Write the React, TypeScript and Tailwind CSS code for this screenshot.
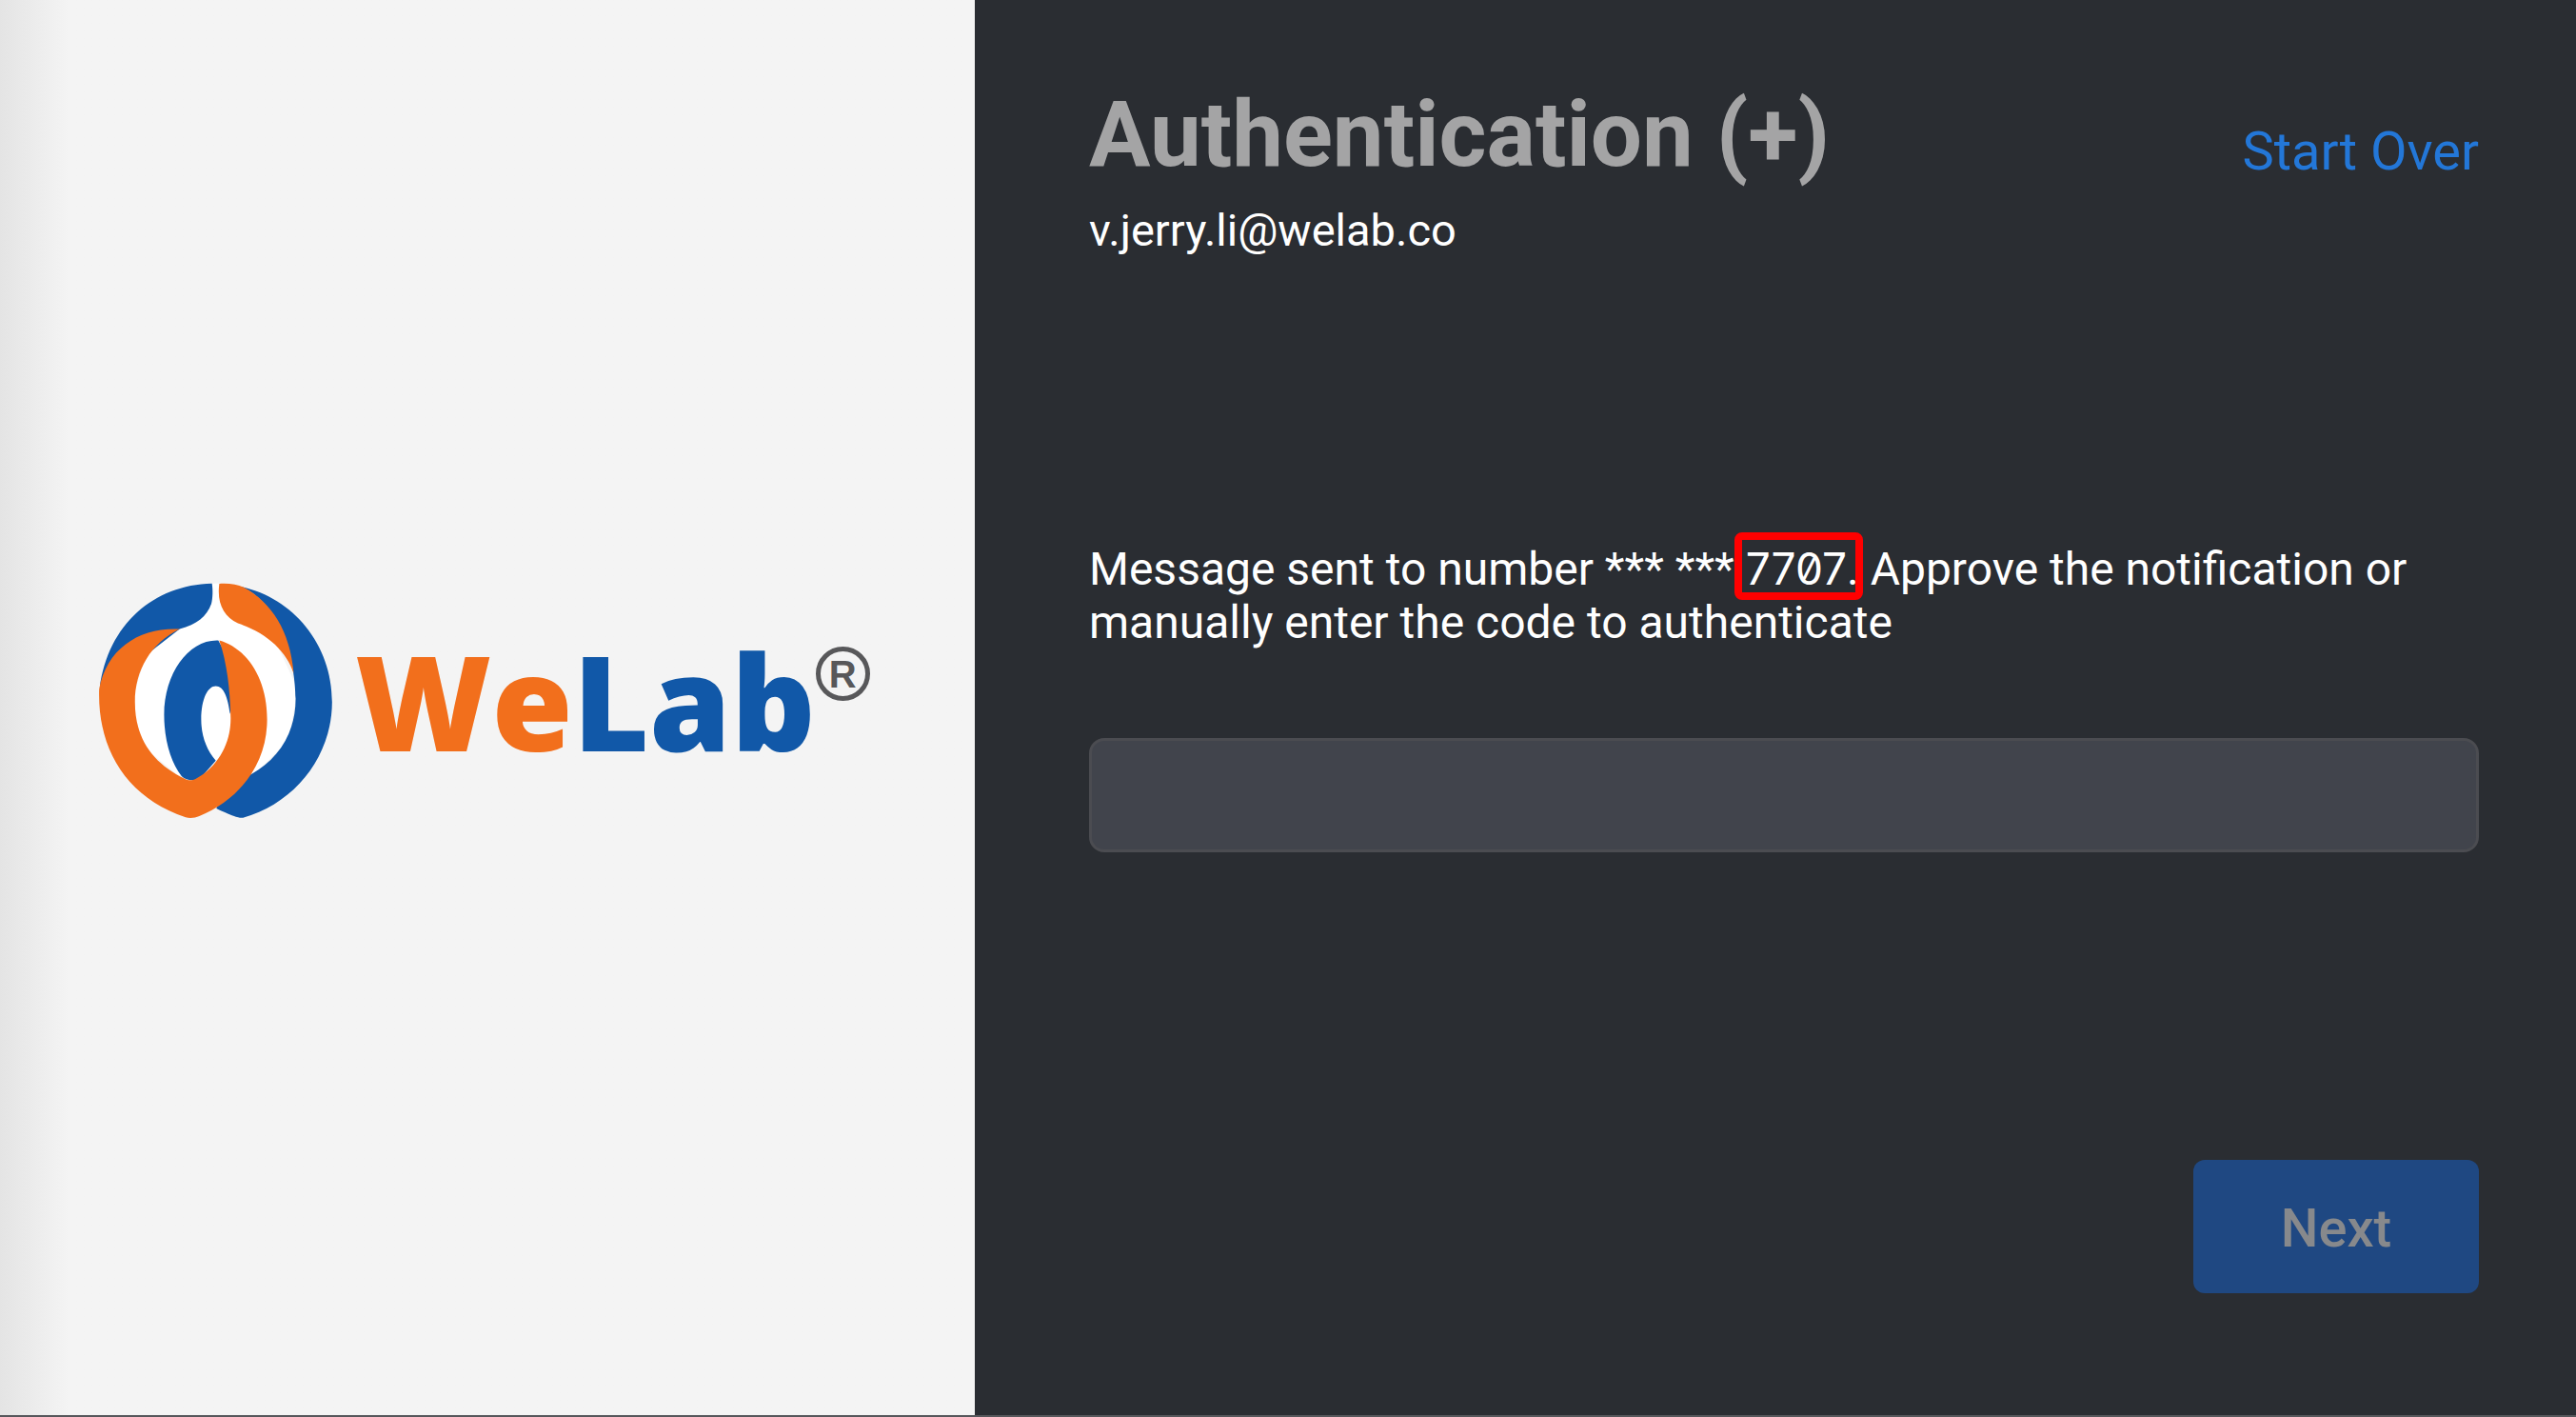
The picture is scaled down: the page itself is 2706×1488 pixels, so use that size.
import { useState } from "react";

function LogoMark() {
  return (
    <svg viewBox="42 64 735 742" className="h-[247px] w-[245px] shrink-0" aria-hidden="true">
      <path
        fill="#fff"
        d="M398 66H422L440 130L500 190L600 250L668 400L640 560L530 670L410 700L290 670L180 580L145 440L190 290L290 205L380 150Z"
      />
      <path
        fill="#1158a8"
        d="M488 76C650 110 777 255 777 440C777 610 660 760 496 805C484 807 470 803 412 776L440 700L522 668C605 622 662 540 662 430C662 320 620 130 488 76Z"
      />
      <path
        fill="#f26f1c"
        d="M421 67C450 65 478 69 498 78C585 125 645 215 656 350C632 278 570 222 480 192C435 170 413 130 421 67Z"
      />
      <path
        fill="#1158a8"
        d="M398 66C215 70 70 195 44 395L180 300L296 210C350 195 382 170 396 130C401 112 401 85 398 66Z"
      />
      <path
        fill="#1158a8"
        d="M418 246C325 242 247 350 247 480C247 560 268 630 302 674C318 690 345 690 362 680L410 625C380 590 364 545 364 495C364 430 385 390 410 390C435 390 448 425 455 478L480 360Z"
      />
      <path
        fill="#f26f1c"
        d="M296 210C170 204 66 270 42 400C36 590 130 742 315 804C328 807 345 806 358 800C480 750 572 640 572 495C572 360 505 270 421 246C446 320 455 400 457 490C458 560 425 640 346 683C336 688 322 688 312 682C215 635 155 560 155 440C155 340 205 255 296 210Z"
      />
    </svg>
  );
}

function Logo() {
  return (
    <div className="flex items-center" aria-label="WeLab">
      <LogoMark />
      <div className="ml-6 flex items-start">
        <span className="font-['Open_Sans',sans-serif] text-[138px] font-extrabold leading-[160px] text-[#f26f1c]">
          We<span className="text-[#1158a8]">Lab</span>
        </span>
        <span className="mt-6 flex size-[57px] items-center justify-center rounded-full border-[5px] border-[#58585a] font-['Liberation_Sans',sans-serif] text-[40px] font-bold leading-none text-[#58585a]">
          R
        </span>
      </div>
    </div>
  );
}

export default function App() {
  const [code, setCode] = useState("");
  return (
    <div className="grid min-h-screen grid-cols-[1024fr_1682fr] border-b-2 border-[#56575b] bg-[#2a2d32] font-['Roboto',sans-serif]">
      <aside className="flex items-center bg-[#f4f4f4] bg-linear-to-r from-[#e4e4e4] to-[#f4f4f4] to-[72px] pb-4 pl-[104px]">
        <Logo />
      </aside>
      <main className="flex flex-col pb-32 pl-[120px] pr-[102px] pt-[85px]">
        <header className="flex items-start justify-between">
          <div>
            <h1 className="text-[96px] font-bold leading-[112px] text-[#a4a4a5]">Authentication (+)</h1>
            <p className="mt-4 text-[47px] leading-[58px] text-white">v.jerry.li@welab.co</p>
          </div>
          <a href="#" className="mt-10 text-[56px] leading-[68px] text-[#2377d8]">
            Start Over
          </a>
        </header>
        <form className="flex grow flex-col" onSubmit={(e) => e.preventDefault()}>
          <label htmlFor="code" className="mt-[298px] block text-[48px] leading-[56px] text-white">
            Message sent to number *** ***{" "}
            <span className="relative">
              <span className="font-['Inter',sans-serif] text-[46px] [font-feature-settings:'zero']">7707</span>.
              <span className="absolute -bottom-1 -left-3 -right-1 -top-2.5 rounded-lg border-8 border-[#ff0000]" />
            </span>{" "}
            Approve the notification or manually enter the code to authenticate
          </label>
          <input
            id="code"
            type="text"
            value={code}
            onChange={(e) => setCode(e.target.value)}
            className="mt-[93px] h-[120px] w-full rounded-2xl border-[3px] border-[#4b4c51] bg-[#41444c] px-8 text-[48px] text-white outline-none"
          />
          <button
            type="submit"
            className="mt-auto h-[140px] w-[300px] self-end rounded-xl bg-[#1f4882] pt-1 text-[56px] font-medium text-[#87898c]"
          >
            Next
          </button>
        </form>
      </main>
    </div>
  );
}
